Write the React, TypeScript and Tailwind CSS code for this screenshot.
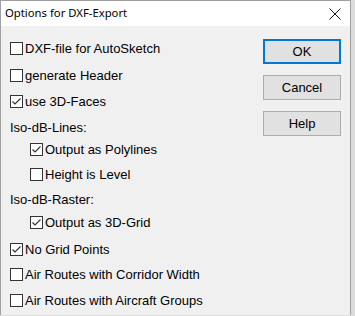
import React from 'react';

const Box = ({ checked }: { checked?: boolean }) => (
  <span className="w-[13px] h-[13px] border border-[#333333] bg-white flex items-center justify-center shrink-0">
    {checked && (
      <svg width="11" height="11" viewBox="0 0 11 11">
        <path d="M1.5 5.5 L4 8 L9.5 2.5" fill="none" stroke="#333333" strokeWidth="1.2" />
      </svg>
    )}
  </span>
);

const Check = ({ label, checked, indent, mt }: { label: string; checked?: boolean; indent?: boolean; mt: string }) => (
  <div className={`h-[13px] leading-[13px] flex items-center gap-[2px] ${mt} ${indent ? 'pl-[29px]' : 'pl-[9px]'}`}>
    <Box checked={checked} />
    <span>{label}</span>
  </div>
);

const Btn = ({ label, def }: { label: string; def?: boolean }) => (
  <div
    className={`w-[78px] h-[25px] flex items-center justify-center bg-[#e1e1e1] ${
      def ? 'border-2 border-[#0078d7]' : 'border border-[#adadad]'
    }`}
  >
    {label}
  </div>
);

const App: React.FC = () => {
  return (
    <div className="w-[355px] h-[316px] bg-[#dcdcdc]" style={{ fontFamily: '"Liberation Sans", Arial, sans-serif' }}>
      <div className="w-[351px] h-[315px] border border-[#a0a0a0] border-b-0 bg-[#f0f0f0] flex flex-col text-[13px] text-black">
        <div className="h-[25px] bg-white flex items-center justify-between pl-[4px] pr-[9px] shrink-0">
          <span className="text-[11.3px]" style={{ fontFamily: '"Noto Sans", sans-serif' }}>Options for DXF-Export</span>
          <svg width="12" height="12" viewBox="0 0 12 12">
            <path d="M0.5 0.5 L11.5 11.5 M11.5 0.5 L0.5 11.5" stroke="#111" strokeWidth="1" />
          </svg>
        </div>
        <div className="flex flex-1">
          <div className="flex flex-col flex-1">
            <Check label="DXF-file for AutoSketch" mt="mt-[16px]" />
            <Check label="generate Header" mt="mt-[14px]" />
            <Check label="use 3D-Faces" checked mt="mt-[13px]" />
            <div className="h-[13px] leading-[13px] flex items-center pl-[9px] mt-[13px]">Iso-dB-Lines:</div>
            <Check label="Output as Polylines" checked indent mt="mt-[9px]" />
            <Check label="Height is Level" indent mt="mt-[12px]" />
            <div className="h-[13px] leading-[13px] flex items-center pl-[9px] mt-[12px]">Iso-dB-Raster:</div>
            <Check label="Output as 3D-Grid" checked indent mt="mt-[10px]" />
            <Check label="No Grid Points" checked mt="mt-[14px]" />
            <Check label="Air Routes with Corridor Width" mt="mt-[12px]" />
            <Check label="Air Routes with Aircraft Groups" mt="mt-[13px]" />
          </div>
          <div className="flex flex-col gap-[11px] pt-[13px] pr-[9px]">
            <Btn label="OK" def />
            <Btn label="Cancel" />
            <Btn label="Help" />
          </div>
        </div>
      </div>
    </div>
  );
};

export default App;
